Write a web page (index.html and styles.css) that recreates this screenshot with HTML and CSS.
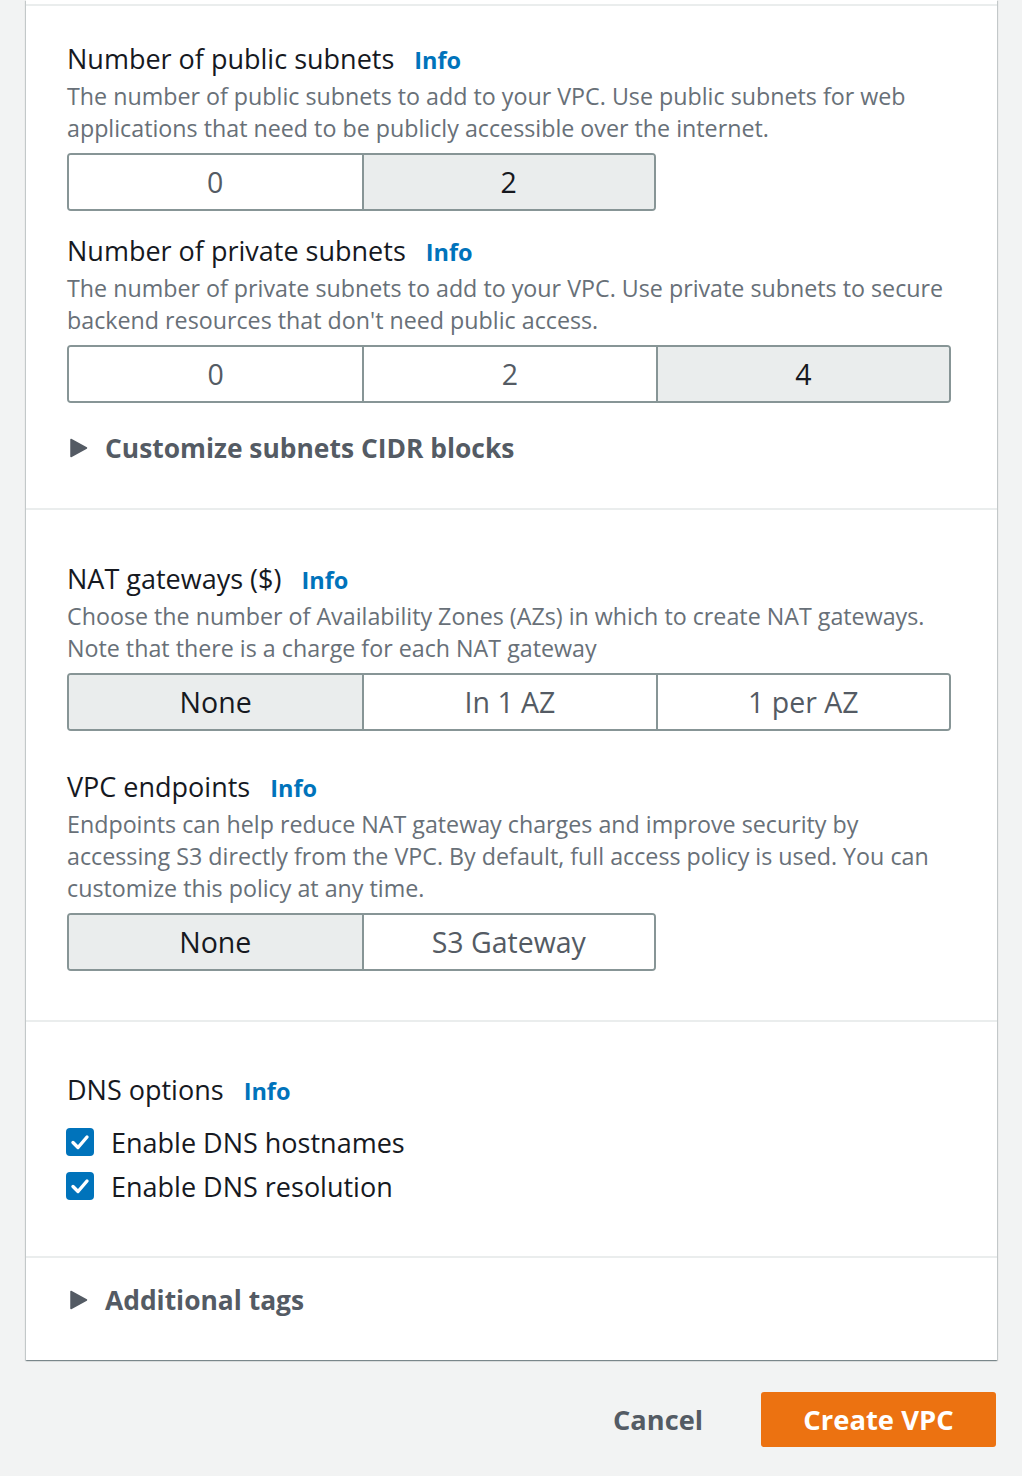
FILE: index.html
```html
<!DOCTYPE html>
<html>
<head>
<meta charset="utf-8">
<link rel="stylesheet" href="styles.css">
</head>
<body>
<div class="page">
  <div class="card">
    <div class="sec sec-stub"></div>

    <div class="sec sec-subnets">
      <div class="label">Number of public subnets <span class="info">Info</span></div>
      <div class="desc">The number of public subnets to add to your VPC. Use public subnets for web<br>applications that need to be publicly accessible over the internet.</div>
      <div class="seg seg-2">
        <div class="opt">0</div>
        <div class="opt sel">2</div>
      </div>

      <div class="label gap-s">Number of private subnets <span class="info">Info</span></div>
      <div class="desc">The number of private subnets to add to your VPC. Use private subnets to secure<br>backend resources that don't need public access.</div>
      <div class="seg seg-3">
        <div class="opt">0</div>
        <div class="opt">2</div>
        <div class="opt sel">4</div>
      </div>

      <div class="expander gap-e">
        <svg class="caret" viewBox="0 0 18 20" width="18" height="20"><path d="M1 1.5 L16.5 10 L1 18.5 Z" fill="#545b64" stroke="#545b64" stroke-width="1.5" stroke-linejoin="round"/></svg>
        <span>Customize subnets CIDR blocks</span>
      </div>
    </div>

    <div class="sec sec-nat">
      <div class="label">NAT gateways ($) <span class="info">Info</span></div>
      <div class="desc">Choose the number of Availability Zones (AZs) in which to create NAT gateways.<br>Note that there is a charge for each NAT gateway</div>
      <div class="seg seg-3">
        <div class="opt sel">None</div>
        <div class="opt">In 1 AZ</div>
        <div class="opt">1 per AZ</div>
      </div>

      <div class="label gap-l">VPC endpoints <span class="info">Info</span></div>
      <div class="desc">Endpoints can help reduce NAT gateway charges and improve security by<br>accessing S3 directly from the VPC. By default, full access policy is used. You can<br>customize this policy at any time.</div>
      <div class="seg seg-2">
        <div class="opt sel">None</div>
        <div class="opt">S3 Gateway</div>
      </div>
    </div>

    <div class="sec sec-dns">
      <div class="label">DNS options <span class="info">Info</span></div>
      <div class="checks">
        <label class="check">
          <span class="box"><svg viewBox="0 0 28 28" width="28" height="28"><path d="M7 14.5 L12 19.5 L21 9" fill="none" stroke="#fff" stroke-width="3.4" stroke-linecap="round" stroke-linejoin="round"/></svg></span>
          <span>Enable DNS hostnames</span>
        </label>
        <label class="check">
          <span class="box"><svg viewBox="0 0 28 28" width="28" height="28"><path d="M7 14.5 L12 19.5 L21 9" fill="none" stroke="#fff" stroke-width="3.4" stroke-linecap="round" stroke-linejoin="round"/></svg></span>
          <span>Enable DNS resolution</span>
        </label>
      </div>
    </div>

    <div class="sec sec-tags">
      <div class="expander">
        <svg class="caret" viewBox="0 0 18 20" width="18" height="20"><path d="M1 1.5 L16.5 10 L1 18.5 Z" fill="#545b64" stroke="#545b64" stroke-width="1.5" stroke-linejoin="round"/></svg>
        <span>Additional tags</span>
      </div>
    </div>
  </div>

  <div class="actions">
    <button class="btn-cancel">Cancel</button>
    <button class="btn-primary">Create VPC</button>
  </div>
</div>
</body>
</html>
```

FILE: styles.css
```css
* { box-sizing: border-box; }

html, body {
  margin: 0;
  padding: 0;
  background: #f2f3f3;
}

body {
  font-family: "Open Sans", "Noto Sans", sans-serif;
  color: #16191f;
}

.page {
  width: 1022px;
  height: 1476px;
  padding-left: 26px;
  overflow: hidden;
}

.card {
  width: 971px;
  background: #fff;
  box-shadow: 0 1px 1px 0 rgba(0, 28, 36, 0.3), 1px 1px 1px 0 rgba(0, 28, 36, 0.15), -1px 1px 1px 0 rgba(0, 28, 36, 0.15);
}

.sec {
  padding-left: 41px;
  padding-right: 46px;
  border-top: 2px solid #eaeded;
}

.sec-stub {
  border-top: none;
  height: 4px;
  padding: 0;
}

.sec-subnets { padding-top: 35px; padding-bottom: 42px; }
.sec-nat { padding-top: 51px; padding-bottom: 49px; }
.sec-dns { padding-top: 50px; padding-bottom: 48px; }
.sec-tags { padding-top: 24px; padding-bottom: 42px; }

.label {
  display: flex;
  align-items: baseline;
  height: 36px;
  font-size: 27px;
  line-height: 36px;
  color: #16191f;
  white-space: pre;
}

.info {
  font-size: 23.5px;
  line-height: 1;
  font-weight: 700;
  color: #0073bb;
  margin-left: 13px;
}

.desc {
  margin-top: 3px;
  font-size: 23.25px;
  line-height: 32px;
  color: #687078;
  white-space: nowrap;
}

.seg {
  margin-top: 9px;
  display: grid;
  grid-auto-flow: column;
  grid-auto-columns: 1fr;
  height: 58px;
  border: 2px solid #879596;
  border-radius: 4px;
  overflow: hidden;
}

.seg-2 { width: 589px; }
.seg-3 { width: 884px; }

.opt {
  display: flex;
  align-items: center;
  justify-content: center;
  font-size: 28.5px;
  color: #545b64;
  background: #fff;
  border-left: 2px solid #879596;
}

.opt:first-child { border-left: none; }

.opt.sel {
  background: #eaeded;
  color: #16191f;
}

.gap-s { margin-top: 22px; }
.gap-l { margin-top: 38px; }
.gap-e { margin-top: 27px; }

.expander {
  display: flex;
  align-items: center;
  height: 36px;
  font-size: 26.4px;
  font-weight: 700;
  color: #545b64;
}

.caret {
  margin-left: 3px;
  margin-right: 17px;
}

.checks {
  margin-top: 12px;
}

.check {
  display: flex;
  align-items: center;
  height: 44px;
  font-size: 27px;
  color: #16191f;
}

.box {
  width: 28px;
  height: 28px;
  border-radius: 4px;
  background: #0073bb;
  margin-left: -1px;
  margin-right: 17px;
  display: flex;
}

.actions {
  display: flex;
  justify-content: flex-end;
  align-items: center;
  width: 970px;
  margin-top: 32px;
}

.btn-cancel {
  border: none;
  background: transparent;
  font-family: inherit;
  font-size: 27.2px;
  font-weight: 700;
  color: #545b64;
  padding: 0;
  margin-right: 58px;
  height: 55px;
}

.btn-primary {
  border: none;
  background: #ec7211;
  color: #fff;
  font-family: inherit;
  font-size: 27.4px;
  font-weight: 700;
  width: 235px;
  height: 55px;
  border-radius: 3px;
}
```
